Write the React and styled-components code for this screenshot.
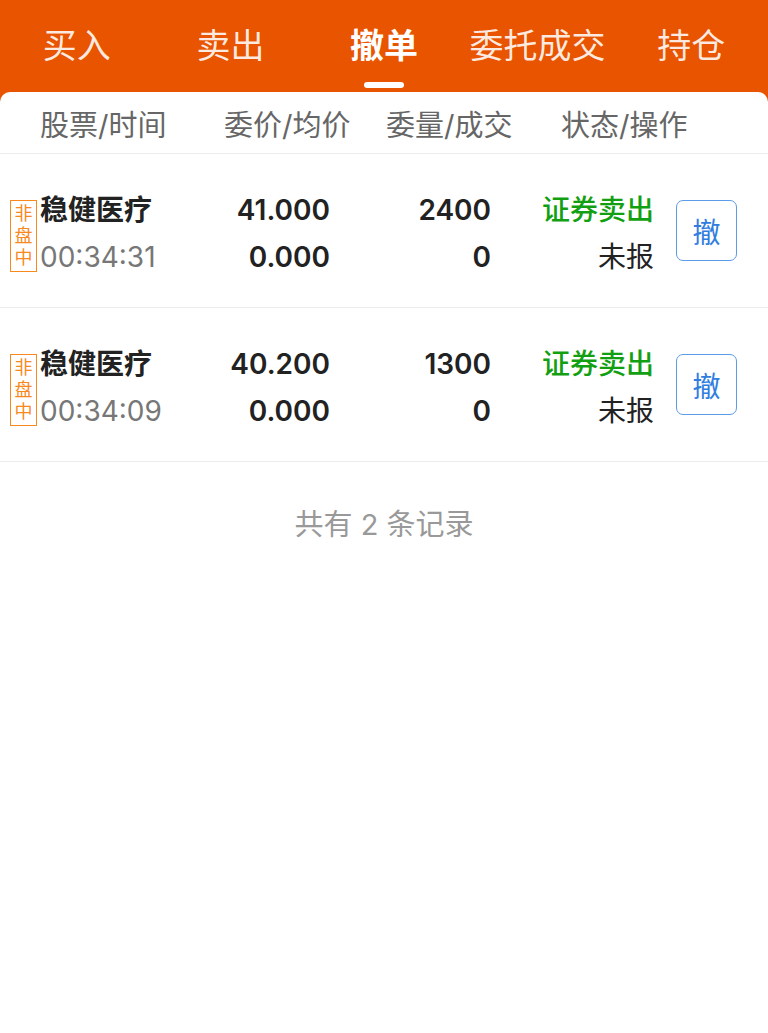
import React from "react";
import styled, { createGlobalStyle } from "styled-components";

const GlobalStyle = createGlobalStyle`
    html, body {
        margin: 0;
        padding: 0;
        background: #fff;
    }
    body {
        font-family: "Inter", "Noto Sans CJK SC", sans-serif;
        -webkit-font-smoothing: antialiased;
    }
`;

const ORANGE = "#e85400";

const Page = styled.div`
    width: 768px;
    min-height: 1033px;
    background: linear-gradient(to bottom, ${ORANGE} 0, ${ORANGE} 120px, #fff 120px);
`;

const TabBar = styled.div`
    display: grid;
    grid-template-columns: repeat(5, 1fr);
    height: 92px;
`;

const Tab = styled.div`
    display: flex;
    flex-direction: column;
    align-items: center;
    padding-top: 22px;
    color: ${({ $active }) => ($active ? "#fff" : "rgba(255, 255, 255, 0.88)")};
    font-size: 34px;
    font-weight: ${({ $active }) => ($active ? 700 : 400)};
    line-height: 48px;

    &::after {
        content: "";
        width: 40px;
        height: 6px;
        margin-top: 12px;
        border-radius: 3px;
        background: ${({ $active }) => ($active ? "#fff" : "transparent")};
    }
`;

const Card = styled.div`
    background: #fff;
    border-radius: 10px 10px 0 0;
    min-height: 941px;
`;

const HeadRow = styled.div`
    display: grid;
    grid-template-columns: 184px 162px 175px 1fr;
    padding-left: 40px;
    height: 61px;
    align-items: center;
    border-bottom: 1px solid #ececec;
    color: #666;
    font-size: 29px;
`;

const Row = styled.div`
    display: grid;
    grid-template-columns: 30px 170px 120px 161px 163px 83px;
    align-items: center;
    padding: 33px 0 26px 10px;
    border-bottom: 1px solid #ececec;
`;

const Badge = styled.div`
    align-self: start;
    display: flex;
    flex-direction: column;
    align-items: center;
    justify-content: center;
    width: 27px;
    height: 72px;
    margin-top: 13px;
    box-sizing: border-box;
    border: 1px solid #f7891f;
    color: #f7891f;
    font-size: 18px;
    line-height: 22px;
`;

const Cell = styled.div`
    display: flex;
    flex-direction: column;
    align-items: ${({ $right }) => ($right ? "flex-end" : "flex-start")};
    font-size: 28px;
    line-height: 47px;
    white-space: nowrap;
`;

const Line = styled.span`
    color: ${({ $color }) => $color || "#222"};
    font-weight: ${({ $weight }) => $weight || 400};
`;

const CancelButton = styled.button`
    align-self: start;
    width: 61px;
    height: 61px;
    margin: 13px 0 0 22px;
    padding: 0;
    box-sizing: border-box;
    border: 1px solid #5b9be8;
    border-radius: 7px;
    background: #fff;
    color: #2f7ddf;
    font-family: inherit;
    font-size: 28px;
`;

const Footer = styled.div`
    padding-top: 40px;
    text-align: center;
    color: #999;
    font-size: 29px;
    line-height: 46px;
`;

const tabs = ["买入", "卖出", "撤单", "委托成交", "持仓"];

const orders = [
    { name: "稳健医疗", time: "00:34:31", price: "41.000", avg: "0.000", qty: "2400", done: "0" },
    { name: "稳健医疗", time: "00:34:09", price: "40.200", avg: "0.000", qty: "1300", done: "0" },
];

export default () => (
    <Page>
        <GlobalStyle />
        <TabBar>
            {tabs.map((t) => (
                <Tab key={t} $active={t === "撤单"}>
                    {t}
                </Tab>
            ))}
        </TabBar>

        <Card>
            <HeadRow>
                <span>股票/时间</span>
                <span>委价/均价</span>
                <span>委量/成交</span>
                <span>状态/操作</span>
            </HeadRow>

            {orders.map((o) => (
                <Row key={o.time}>
                    <Badge>
                        <span>非</span>
                        <span>盘</span>
                        <span>中</span>
                    </Badge>
                    <Cell>
                        <Line $weight={700}>{o.name}</Line>
                        <Line $color="#777">{o.time}</Line>
                    </Cell>
                    <Cell $right>
                        <Line $weight={600}>{o.price}</Line>
                        <Line $weight={600}>{o.avg}</Line>
                    </Cell>
                    <Cell $right>
                        <Line $weight={600}>{o.qty}</Line>
                        <Line $weight={600}>{o.done}</Line>
                    </Cell>
                    <Cell $right>
                        <Line $color="#12a012" $weight={500}>证券卖出</Line>
                        <Line>未报</Line>
                    </Cell>
                    <CancelButton>撤</CancelButton>
                </Row>
            ))}

            <Footer>共有 2 条记录</Footer>
        </Card>
    </Page>
);
